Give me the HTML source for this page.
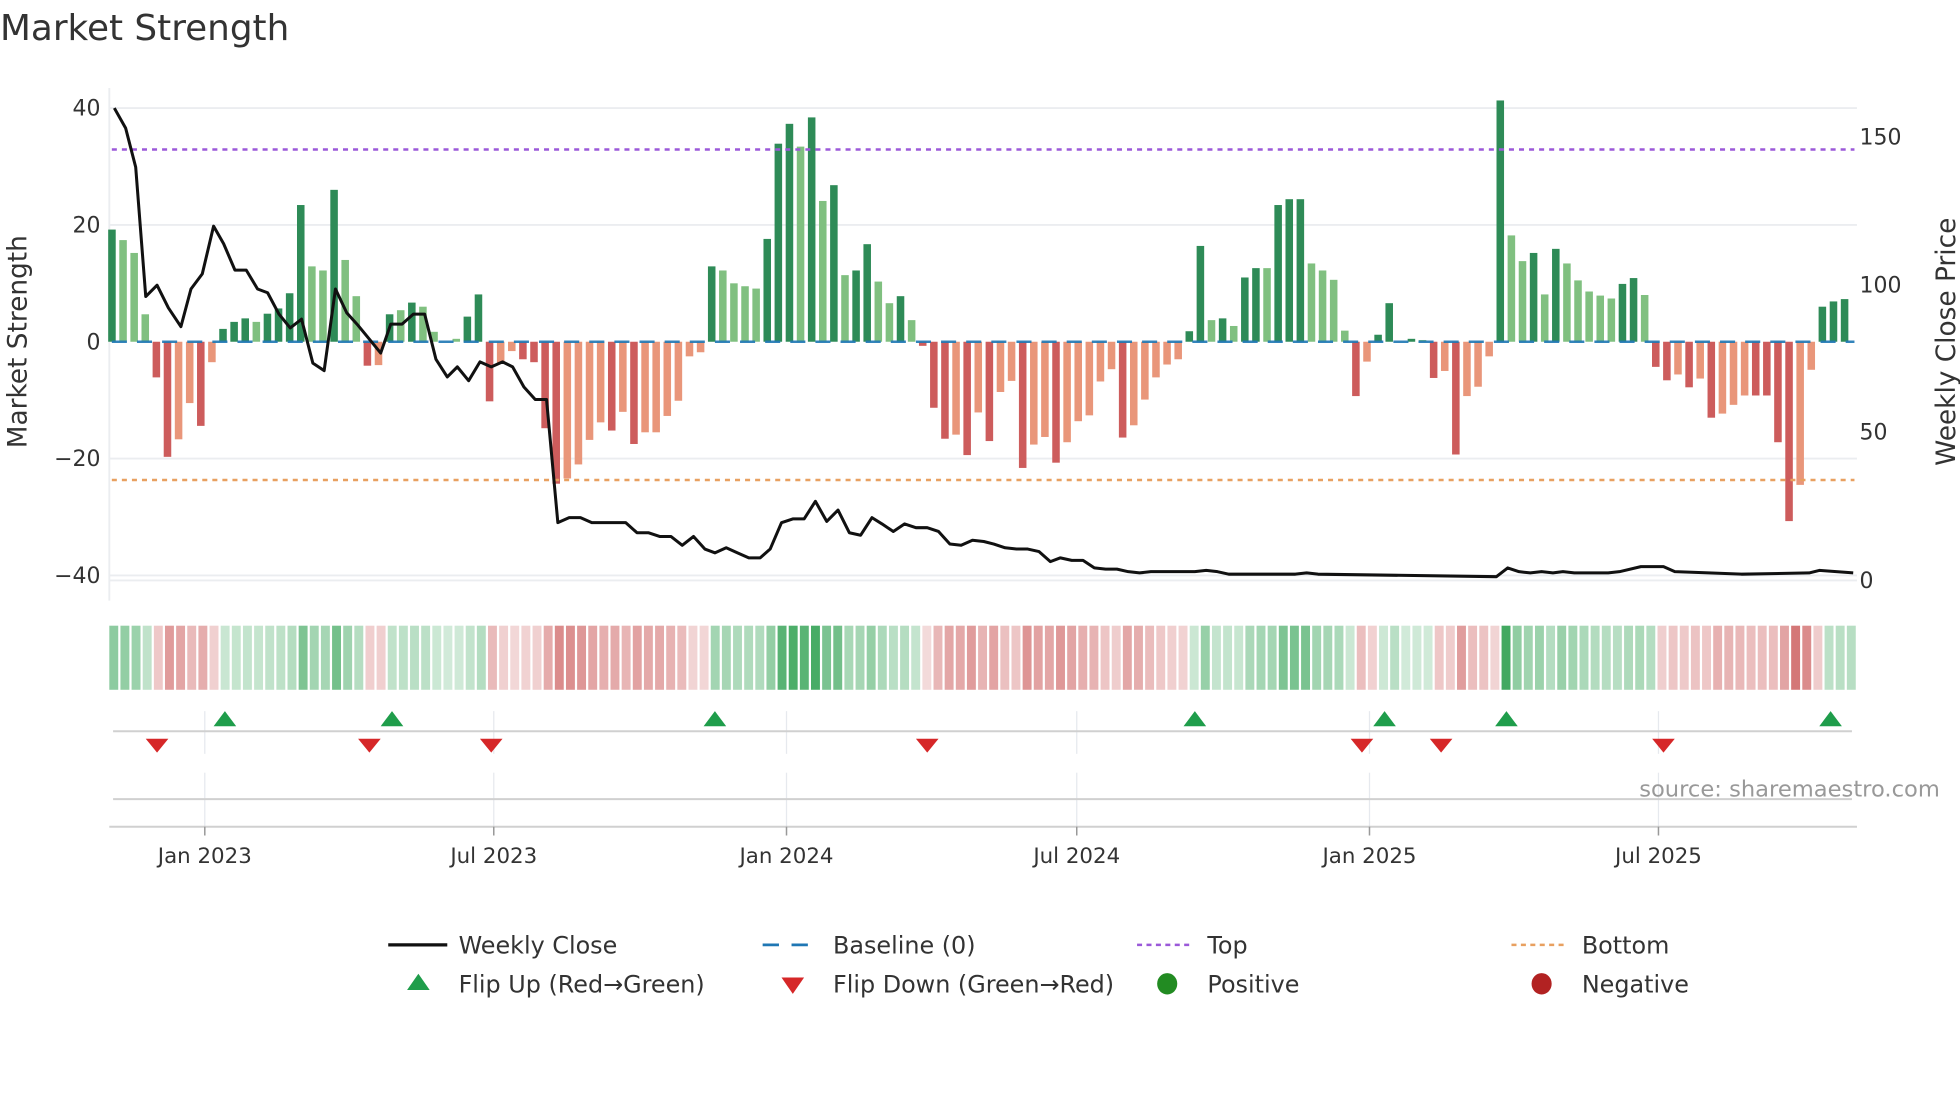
<!DOCTYPE html>
<html><head><meta charset="utf-8"><style>
html,body{margin:0;padding:0;background:#fff;}
svg{display:block;}
text{font-family:"DejaVu Sans","Liberation Sans",sans-serif;fill:#333;}
</style></head><body>
<svg id="s" width="1960" height="1102" viewBox="0 0 1560 877.1" xmlns="http://www.w3.org/2000/svg">
<rect width="1560" height="877.1" fill="#fff"/>
<text x="0" y="32" font-size="28.5" fill="#333">Market Strength</text>
<g stroke="#ebedf0" stroke-width="1.5">
<line x1="87" y1="86" x2="1478" y2="86"/>
<line x1="87" y1="179" x2="1478" y2="179"/>
<line x1="87" y1="365" x2="1478" y2="365"/>
<line x1="87" y1="458" x2="1478" y2="458"/>
<line x1="87" y1="462" x2="1478" y2="462"/>
<line x1="87" y1="70" x2="87" y2="478"/>
</g>
<g font-size="17.5" text-anchor="end">
<text x="80" y="92">40</text><text x="80" y="185">20</text><text x="80" y="278">0</text>
<text x="80" y="371">−20</text><text x="80" y="464">−40</text>
</g>
<g font-size="17.5">
<text x="1480" y="115">150</text><text x="1480" y="233">100</text><text x="1480" y="350">50</text><text x="1480" y="468">0</text>
</g>
<text transform="translate(21,272) rotate(-90)" font-size="21" text-anchor="middle">Market Strength</text>
<text transform="translate(1556,272) rotate(-90)" font-size="21" text-anchor="middle">Weekly Close Price</text>
<g id="bars"></g>
<line x1="89" y1="272" x2="1476" y2="272" stroke="#1f77b4" stroke-width="2" stroke-dasharray="12,8" opacity="0.9"/>
<line x1="89" y1="119" x2="1476" y2="119" stroke="#9b59d9" stroke-width="2" stroke-dasharray="4,4"/>
<line x1="89" y1="382" x2="1476" y2="382" stroke="#e8a060" stroke-width="2" stroke-dasharray="4,4"/>
<polyline id="price" fill="none" stroke="#111" stroke-width="2.4" stroke-linejoin="round" points=""/>
<g id="strip"></g>
<g stroke="#e6e9ee" stroke-width="1">
<line x1="163" y1="566" x2="163" y2="600"/><line x1="393" y1="566" x2="393" y2="600"/><line x1="626" y1="566" x2="626" y2="600"/><line x1="857" y1="566" x2="857" y2="600"/><line x1="1090" y1="566" x2="1090" y2="600"/><line x1="1320" y1="566" x2="1320" y2="600"/>
<line x1="163" y1="615" x2="163" y2="658"/><line x1="393" y1="615" x2="393" y2="658"/><line x1="626" y1="615" x2="626" y2="658"/><line x1="857" y1="615" x2="857" y2="658"/><line x1="1090" y1="615" x2="1090" y2="658"/><line x1="1320" y1="615" x2="1320" y2="658"/>
</g>
<line x1="90" y1="582" x2="1474" y2="582" stroke="#d0d0d0" stroke-width="1.6"/>
<line x1="90" y1="636" x2="1474" y2="636" stroke="#d0d0d0" stroke-width="1.6"/>
<line x1="87" y1="658" x2="1478" y2="658" stroke="#d0d0d0" stroke-width="1.6"/>
<g stroke="#999" stroke-width="1.2">
<line x1="163" y1="658" x2="163" y2="665"/><line x1="393" y1="658" x2="393" y2="665"/><line x1="626" y1="658" x2="626" y2="665"/><line x1="857" y1="658" x2="857" y2="665"/><line x1="1090" y1="658" x2="1090" y2="665"/><line x1="1320" y1="658" x2="1320" y2="665"/>
</g>
<g id="flips"></g>
<g font-size="17" text-anchor="middle">
<text x="163" y="687">Jan 2023</text><text x="393" y="687">Jul 2023</text><text x="626" y="687">Jan 2024</text><text x="857" y="687">Jul 2024</text><text x="1090" y="687">Jan 2025</text><text x="1320" y="687">Jul 2025</text>
</g>
<text x="1544" y="634" font-size="18" text-anchor="end" style="fill:#999">source: sharemaestro.com</text>
<g font-size="19">
<line x1="309" y1="752" x2="356" y2="752" stroke="#111" stroke-width="2.6"/>
<text x="365" y="759">Weekly Close</text>
<line x1="607" y1="752" x2="650" y2="752" stroke="#1f77b4" stroke-width="2.2" stroke-dasharray="13,10"/>
<text x="663" y="759">Baseline (0)</text>
<line x1="905" y1="752" x2="950" y2="752" stroke="#9b59d9" stroke-width="2" stroke-dasharray="4,3.5"/>
<text x="961" y="759">Top</text>
<line x1="1203" y1="752" x2="1248" y2="752" stroke="#e8a060" stroke-width="2" stroke-dasharray="4,3.5"/>
<text x="1259" y="759">Bottom</text>
<polygon points="324,788 342,788 333,775" fill="#1f9d4b"/>
<text x="365" y="790">Flip Up (Red→Green)</text>
<polygon points="622,778 640,778 631,791" fill="#d62728"/>
<text x="663" y="790">Flip Down (Green→Red)</text>
<ellipse cx="929" cy="783" rx="8" ry="8.5" fill="#228b22"/>
<text x="961" y="790">Positive</text>
<ellipse cx="1227" cy="783" rx="8" ry="8.5" fill="#b22222"/>
<text x="1259" y="790">Negative</text>
</g>
</svg>
<script>
var D="19.2d 17.4l 15.2l 4.7l -6.1d -19.7d -16.7l -10.5l -14.4d -3.5l 2.2d 3.4d 4.0d 3.4l 4.8d 5.7d 8.3d 23.4d 12.9l 12.2l 26d 14l 7.8l -4.1d -4.0l 4.7d 5.4l 6.7d 6.0l 1.7l 0l 0.5l 4.3d 8.1d -10.2d -3.6l -1.6l -3.0d -3.5d -14.8d -24.3d -23.4l -21l -16.8l -13.8l -15.2d -12l -17.5d -15.5l -15.5l -12.7l -10.1l -2.5l -1.8l 12.9d 12.2l 10l 9.5l 9.1l 17.6d 33.9d 37.3d 33.4l 38.4d 24.1l 26.8d 11.4l 12.2d 16.7d 10.3l 6.6l 7.8d 3.7l -0.7d -11.3d -16.6d -15.9l -19.4d -12.1l -17d -8.6l -6.7l -21.6d -17.6l -16.3l -20.7d -17.2l -13.6l -12.6l -6.8l -4.7l -16.4d -14.3l -9.9l -6.1l -3.9l -3l 1.8d 16.4d 3.7l 4d 2.7l 11d 12.6d 12.6l 23.4d 24.4d 24.4d 13.4l 12.2l 10.6l 1.9l -9.3d -3.4l 1.2d 6.6d 0l 0.5d 0.3l -6.2d -5l -19.3d -9.3l -7.7l -2.5l 41.3d 18.2l 13.8l 15.2d 8.1l 15.9d 13.4l 10.5l 8.6l 7.9l 7.4l 9.9d 10.9d 8l -4.3d -6.6d -5.6l -7.8d -6.3l -13d -12.3l -10.8l -9.2l -9.2d -9.2d -17.2d -30.7d -24.5l -4.8l 6d 6.9d 7.3d".split(" ");
var NS="http://www.w3.org/2000/svg",bars=document.getElementById("bars"),strip=document.getElementById("strip");
function el(t,a,p){var e=document.createElementNS(NS,t);for(var k in a)e.setAttribute(k,a[k]);p.appendChild(e);return e;}
var z=272,u=4.65,sp=8.84,x0=89.1;
D.forEach(function(s,i){var v=parseFloat(s),d=s.slice(-1)=="d";var cx=x0+i*sp;
 if(Math.abs(v)>0.05){var c=v>0?(d?"#2e8b57":"#80c080"):(d?"#cd5c5c":"#e9967a");
 var h=Math.abs(v)*u;el("rect",{x:cx-3,y:v>0?z-h:z,width:6,height:h,fill:c},bars);}
 var a=Math.min(Math.abs(v)/40,1);var al=0.22+0.68*a;
 var col=v>=0?"rgba(46,160,80,"+al.toFixed(3)+")":"rgba(200,80,80,"+(0.2+0.75*a).toFixed(3)+")";
 el("rect",{x:87+i*8.865,y:498,width:7.1,height:51,fill:col},strip);
});
var P=[[91,86],[100,102],[108,133],[116,236],[125,227],[134,245],[144,260],[152,230],[161,218],[170,180],[178,194],[187,215],[196,215],[205,230],[213,233],[222,250],[231,261],[240,254],[249,289],[258,295],[267,230],[276,249],[285,259],[294,270],[303,281],[311,258],[320,258],[329,250],[338,250],[347,286],[356,300],[364,292],[373,303],[382,288],[391,292],[400,288],[408,292],[417,308],[426,318],[435,318],[444,416],[453,412],[462,412],[471,416],[480,416],[489,416],[498,416],[507,424],[516,424],[525,427],[534,427],[543,434],[552,427],[561,437],[569,440],[578,436],[587,440],[596,444],[605,444],[613,437],[622,416],[631,413],[640,413],[649,399],[658,415],[667,406],[676,424],[685,426],[694,412],[702,417],[711,423],[720,417],[729,420],[738,420],[747,423],[756,433],[765,434],[774,430],[783,431],[791,433],[800,436],[809,437],[818,437],[827,439],[836,447],[844,444],[853,446],[862,446],[871,452],[880,453],[889,453],[898,455],[907,456],[916,455],[951,455],[960,454],[969,455],[978,457],[1031,457],[1040,456],[1049,457],[1191,459],[1200,452],[1209,455],[1218,456],[1227,455],[1236,456],[1244,455],[1253,456],[1262,456],[1280,456],[1289,455],[1306,451],[1324,451],[1333,455],[1360,456],[1386,457],[1440,456],[1448,454],[1475,456]];
document.getElementById("price").setAttribute("points",P.map(function(p){return p.join(",")}).join(" "));
var F=document.getElementById("flips");
[179,312,569,951,1102,1199,1457].forEach(function(x){el("polygon",{points:(x-9)+",578 "+(x+9)+",578 "+x+",566",fill:"#1f9d4b"},F);});
[125,294,391,738,1084,1147,1324].forEach(function(x){el("polygon",{points:(x-9)+",588 "+(x+9)+",588 "+x+",599",fill:"#d62728"},F);});
</script>
</body></html>
